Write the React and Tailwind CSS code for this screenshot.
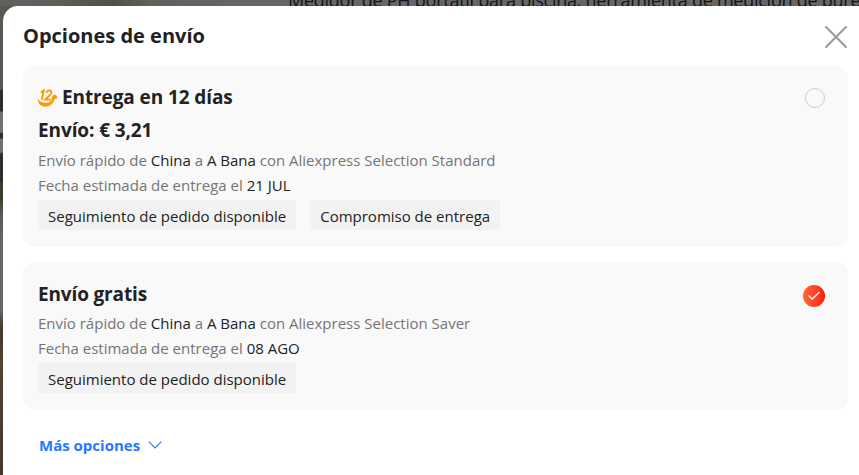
import React from "react";

function SpeedBadge() {
  return (
    <svg width="20" height="20" viewBox="0 0 20 20" fill="none" stroke="#ff9900" className="mt-[2px] shrink-0">
      <path d="M2.8 4.4L5.6 2.6L3.8 11.9" strokeWidth="2" />
      <path d="M8.4 4.7C9.2 1.8 14.2 1.7 13.4 4.9C12.9 7.2 9 9.3 7.2 11.6H13.2" strokeWidth="1.9" />
      <path d="M0 10.6C-0.2 15.6 2.6 18.6 7.4 18.6C12.4 18.6 15.8 14.8 17 10.8L19.6 10.3C19.1 8.2 17.9 6.9 16.3 6.2C14.9 7.4 14 9 13.6 10.9L14.3 11.2C12.8 13.8 10.4 15 7.4 14.9C4 14.8 1.4 13.6 0 10.6Z" fill="#ff9900" stroke="none" />
    </svg>
  );
}

function Details({ service, date }) {
  return (
    <div className="text-[15px] leading-[25px] text-[#757575]">
      <p>Envío rápido de <span className="text-[#222]">China</span> a <span className="text-[#222]">A Bana</span> con Aliexpress Selection {service}</p>
      <p>Fecha estimada de entrega el <span className="text-[#222]">{date}</span></p>
    </div>
  );
}

function Tag({ children }) {
  return <span className="flex h-[30px] items-center bg-[#f2f2f2] px-[10px] pt-[2px] text-[15px] text-[#222]">{children}</span>;
}

export default function App() {
  return (
    <div className="flex h-[475px] w-[859px] flex-col overflow-hidden bg-[linear-gradient(#555a50_0px,#555a55_89px,#2d2d2e_90px,#2d2d2e_111px,#707070_112px,#707070_132px,#2d2d2e_134px,#2d2d2e_138px,#707070_139px,#707070_152px,#2d2d2e_154px,#2d2d2e_181px,#344027_182px,#344027_196px,#555a58_215px,#666_240px,#666_310px,#45392a_328px,#504433_365px,#43382a_475px)] font-['Open_Sans',sans-serif] text-[#222]">
      <div className="flex h-[6px] shrink-0 overflow-hidden bg-[#666]">
        <div className="w-[248px] shrink-0 bg-[linear-gradient(90deg,#60625f,#5b6057_60px,#4d5148_110px,#5d625b_150px,#666)]" />
        <p className="-mt-[12px] ml-[40px] whitespace-nowrap text-[18px] leading-[24px] tracking-[-0.25px] text-[#151515]">Medidor de PH portátil para piscina, herramienta de medición de pure</p>
      </div>
      <main className="ml-[3px] flex-1 rounded-tl-[15px] bg-white pr-[11px] pl-[20px]">
        <header className="flex h-[60px] items-center justify-between">
          <h1 className="text-[20px] leading-[28px] font-bold">Opciones de envío</h1>
          <svg width="24" height="24" viewBox="0 0 24 24" stroke="#999" strokeWidth="2" strokeLinecap="round" className="mt-[2px]">
            <path d="M2 2L22 22M22 2L2 22" />
          </svg>
        </header>
        <section className="flex h-[181px] justify-between rounded-[12px] bg-[#f9f9f9] pt-[15px] pr-[23px] pl-[15px]">
          <div>
            <h2 className="flex h-[32px] items-center gap-[4px] text-[19px] font-bold tracking-[-0.1px]"><SpeedBadge />Entrega en 12 días</h2>
            <h2 className="h-[35px] text-[19px] leading-[34px] font-bold tracking-[-0.1px]">Envío: € 3,21</h2>
            <Details service="Standard" date="21 JUL" />
            <div className="mt-[2px] flex gap-[14px]">
              <Tag>Seguimiento de pedido disponible</Tag>
              <Tag>Compromiso de entrega</Tag>
            </div>
          </div>
          <span className="mt-[7px] size-[20px] rounded-full border border-[#ccc]" />
        </section>
        <section className="mt-[15px] flex h-[148px] justify-between rounded-[12px] bg-[#f9f9f9] pt-[15px] pr-[23px] pl-[15px]">
          <div>
            <h2 className="h-[34px] text-[19px] leading-[34px] font-bold tracking-[-0.15px]">Envío gratis</h2>
            <Details service="Saver" date="08 AGO" />
            <div className="mt-[2px] flex">
              <Tag>Seguimiento de pedido disponible</Tag>
            </div>
          </div>
          <span className="mt-[8px] flex size-[22px] items-center justify-center rounded-full bg-linear-to-r from-[#ff6535] to-[#ff0b0b]">
            <svg width="14" height="12" viewBox="0 0 14 12" fill="none" stroke="white" strokeWidth="1.3"><path d="M1.5 5.5L5.2 9L12.5 2" /></svg>
          </span>
        </section>
        <button className="mt-[24px] ml-[16px] flex items-center gap-[8px] text-[15px] leading-[22px] font-bold text-[#2878ff]">
          Más opciones
          <svg width="14" height="8" viewBox="0 0 14 8" fill="none" stroke="currentColor" strokeWidth="1.1"><path d="M0.7 0.7L7 7L13.3 0.7" /></svg>
        </button>
      </main>
    </div>
  );
}
